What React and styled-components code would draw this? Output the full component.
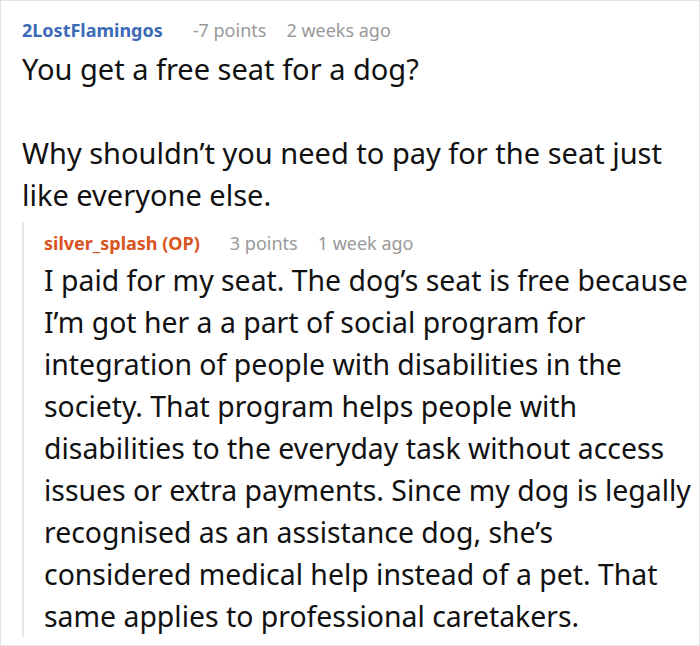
import React from "react";
import styled, { createGlobalStyle } from "styled-components";

const Global = createGlobalStyle`
  html, body { margin: 0; padding: 0; background: #fff; }
  body { font-family: "Noto Sans", "Open Sans", sans-serif; }
`;

const Frame = styled.div`
  box-sizing: border-box;
  width: 700px;
  height: 646px;
  border: 1px solid #e2e2e2;
  padding: 17px 6px 0 21px;
  overflow: hidden;
`;

const Comment = styled.div`
  display: flex;
  flex-direction: column;
`;

const Meta = styled.div`
  display: flex;
  align-items: center;
  height: 24px;
  font-size: 18px;
  line-height: 24px;
  margin-bottom: ${(p) => p.$gap}px;
`;

const Author = styled.span`
  font-weight: 700;
  color: ${(p) => p.$color};
  margin-right: 30px;
`;

const Points = styled.span`
  color: #999;
  margin-right: 20px;
`;

const Time = styled.span`
  color: #999;
`;

const Body = styled.div`
  font-size: ${(p) => p.$size}px;
  line-height: 42px;
  color: #111;
  margin-bottom: ${(p) => p.$tail || 0}px;
  p { margin: 0 0 42px; }
  p:last-child { margin-bottom: 0; }
`;

const Reply = styled.div`
  margin-top: 6px;
  border-left: 2px solid #e6e6e6;
  padding: 9px 0 0 20px;
`;

export default function App() {
  return (
    <>
      <Global />
      <Frame>
        <Comment>
          <Meta $gap={6}>
            <Author $color="#3a6ab8">2LostFlamingos</Author>
            <Points>-7 points</Points>
            <Time>2 weeks ago</Time>
          </Meta>
          <Body $size={29}>
            <p>You get a free seat for a dog?</p>
            <p>Why shouldn’t you need to pay for the seat just like everyone else.</p>
          </Body>
        </Comment>
        <Reply>
          <Meta $gap={4}>
            <Author $color="#d9541e">silver_splash (OP)</Author>
            <Points>3 points</Points>
            <Time>1 week ago</Time>
          </Meta>
          <Body $size={28.4} $tail={-6}>
            <p>
              I paid for my seat. The dog’s seat is free because I’m got her a a part of social
              program for integration of people with disabilities in the society. That program
              helps people with disabilities to the everyday task without access issues or extra
              payments. Since my dog is legally recognised as an assistance dog, she’s considered
              medical help instead of a pet. That same applies to professional caretakers.
            </p>
          </Body>
        </Reply>
      </Frame>
    </>
  );
}
